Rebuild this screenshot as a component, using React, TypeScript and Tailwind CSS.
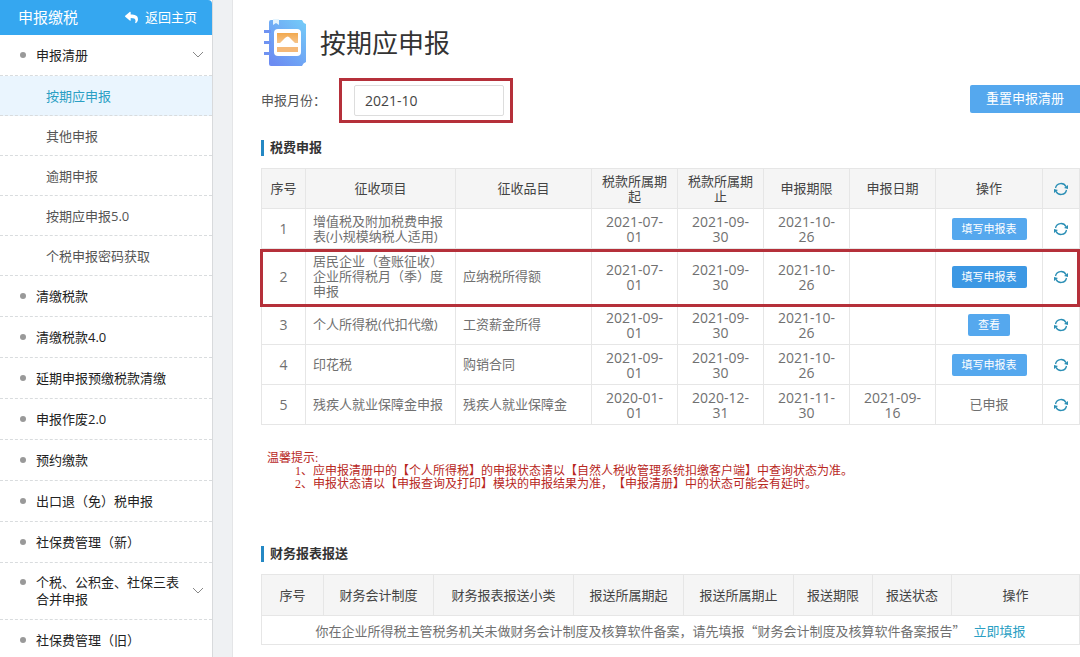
import type { ReactNode } from "react";
import { FaReply } from "react-icons/fa";

type MenuItem = {
  label: string;
  expandable?: boolean;
  children?: string[];
};

type TaxRow = {
  item: string;
  subItem: string;
  from: string;
  to: string;
  deadline: string;
  filedOn?: string;
  action: string;
  done?: boolean;
  highlighted?: boolean;
};

const menu: MenuItem[] = [
  {
    label: "申报清册",
    expandable: true,
    children: ["按期应申报", "其他申报", "逾期申报", "按期应申报5.0", "个税申报密码获取"],
  },
  { label: "清缴税款" },
  { label: "清缴税款4.0" },
  { label: "延期申报预缴税款清缴" },
  { label: "申报作废2.0" },
  { label: "预约缴款" },
  { label: "出口退（免）税申报" },
  { label: "社保费管理（新）" },
  { label: "个税、公积金、社保三表合并申报", expandable: true },
  { label: "社保费管理（旧）" },
];

const taxRows: TaxRow[] = [
  {
    item: "增值税及附加税费申报表(小规模纳税人适用)",
    subItem: "",
    from: "2021-07-01",
    to: "2021-09-30",
    deadline: "2021-10-26",
    action: "填写申报表",
  },
  {
    item: "居民企业（查账征收）企业所得税月（季）度申报",
    subItem: "应纳税所得额",
    from: "2021-07-01",
    to: "2021-09-30",
    deadline: "2021-10-26",
    action: "填写申报表",
    highlighted: true,
  },
  {
    item: "个人所得税(代扣代缴)",
    subItem: "工资薪金所得",
    from: "2021-09-01",
    to: "2021-09-30",
    deadline: "2021-10-26",
    action: "查看",
  },
  {
    item: "印花税",
    subItem: "购销合同",
    from: "2021-09-01",
    to: "2021-09-30",
    deadline: "2021-10-26",
    action: "填写申报表",
  },
  {
    item: "残疾人就业保障金申报",
    subItem: "残疾人就业保障金",
    from: "2020-01-01",
    to: "2020-12-31",
    deadline: "2021-11-30",
    filedOn: "2021-09-16",
    action: "已申报",
    done: true,
  },
];

export default function App() {
  return (
    <div className="flex h-screen overflow-hidden bg-[#eff1f3] font-['Open_Sans','Noto_Sans_CJK_SC',sans-serif] text-[13px] text-[#707070] [text-spacing-trim:space-all]">
      <Sidebar />
      <main className="ml-[19px] min-w-0 flex-1 border-l border-[#e4e5e7] bg-white pl-7">
        <header className="flex items-center gap-[13px] pt-[19px]">
          <BookIcon />
          <h1 className="text-[26px] leading-[46px] text-[#333]">按期应申报</h1>
        </header>

        <div className="mt-[11px] flex items-center">
          <label htmlFor="month" className="w-[78px] text-[#555]">
            申报月份：
          </label>
          <div className="border-3 border-[#b5303a] py-1 pr-1.5 pl-3">
            <input
              id="month"
              type="text"
              defaultValue="2021-10"
              className="block h-[31px] w-[150px] rounded-xs border border-[#ddd] bg-white px-2.5 text-sm text-[#444] outline-none"
            />
          </div>
          <button type="button" className="mb-1 ml-auto h-7 rounded-l-xs bg-[#55a8ee] px-4 text-white">
            重置申报清册
          </button>
        </div>

        <SectionTitle className="mt-[15px]">税费申报</SectionTitle>
        <TaxTable />

        <div className="mt-[27px] pl-1.5 font-['Liberation_Serif','Noto_Sans_CJK_SC',serif] text-xs leading-[13px] text-[#b8281e]">
          <p>温馨提示:</p>
          <ol className="pl-7">
            <li>1、应申报清册中的【个人所得税】的申报状态请以【自然人税收管理系统扣缴客户端】中查询状态为准。</li>
            <li>2、申报状态请以【申报查询及打印】模块的申报结果为准，【申报清册】中的状态可能会有延时。</li>
          </ol>
        </div>

        <SectionTitle className="mt-[53px]">财务报表报送</SectionTitle>
        <ReportTable />
      </main>
    </div>
  );
}

function Sidebar() {
  return (
    <aside className="w-[213px] shrink-0 border-r border-[#d8dadc] bg-white">
      <div className="flex h-[35px] items-center justify-between rounded-tr-sm bg-[#35a7f0] pr-[15px] pl-[18px] text-white">
        <h2 className="text-[15px]">申报缴税</h2>
        <a href="#" className="flex items-center gap-[7px]">
          <FaReply className="size-[13px]" />
          返回主页
        </a>
      </div>
      <nav>
        <ul>
          {menu.map((entry) => (
            <li key={entry.label}>
              <a
                href="#"
                className="flex min-h-[41px] items-center justify-between border-b border-dashed border-[#d9dcde] py-[11px] pr-2 pl-5 text-[#222]"
              >
                <span className="flex gap-2.5 leading-[17px]">
                  <span className="mt-[5px] size-1.5 shrink-0 rounded-full bg-[#999]" />
                  <span className="max-w-[150px]">{entry.label}</span>
                </span>
                {entry.expandable && <Chevron />}
              </a>
              {entry.children && (
                <ul>
                  {entry.children.map((child, i) => (
                    <li key={child}>
                      <a
                        href="#"
                        className={`flex h-10 items-center border-b border-dashed border-[#d9dcde] pt-0.5 pl-[46px] ${
                          i === 0 ? "bg-[#eaf5fe] text-[#2b9fc4]" : "text-[#555]"
                        }`}
                      >
                        {child}
                      </a>
                    </li>
                  ))}
                </ul>
              )}
            </li>
          ))}
        </ul>
      </nav>
    </aside>
  );
}

function SectionTitle({ children, className }: { children: ReactNode; className: string }) {
  return (
    <h3 className={`flex h-5 items-center gap-1.5 font-bold text-[#333] ${className}`}>
      <span className="h-4 w-[3px] bg-[#2488c4]" />
      {children}
    </h3>
  );
}

function TaxTable() {
  return (
    <table className="mt-2.5 w-full table-fixed border-collapse leading-[15px]">
      <colgroup>
        <col className="w-11" />
        <col className="w-[150px]" />
        <col className="w-[136px]" />
        <col className="w-[86px]" />
        <col className="w-[86px]" />
        <col className="w-[86px]" />
        <col className="w-[86px]" />
        <col />
        <col className="w-[37px]" />
      </colgroup>
      <thead>
        <tr className="h-10 bg-[#f5f5f5]">
          <Th>序号</Th>
          <Th>征收项目</Th>
          <Th>征收品目</Th>
          <Th>税款所属期起</Th>
          <Th>税款所属期止</Th>
          <Th>申报期限</Th>
          <Th>申报日期</Th>
          <Th>操作</Th>
          <Th>
            <RefreshButton label="全部刷新" />
          </Th>
        </tr>
      </thead>
      <tbody>
        {taxRows.map((row, i) => (
          <tr key={row.item} className={row.highlighted ? "relative h-14" : "h-10"}>
            <NumTd>
              {i + 1}
              {row.highlighted && (
                <span className="pointer-events-none absolute top-0 right-0 -bottom-0.5 -left-0.5 border-3 border-[#b5303a]" />
              )}
            </NumTd>
            <Td>{row.item}</Td>
            <Td>{row.subItem}</Td>
            <NumTd>{breakableDate(row.from)}</NumTd>
            <NumTd>{breakableDate(row.to)}</NumTd>
            <NumTd>{breakableDate(row.deadline)}</NumTd>
            <NumTd>{row.filedOn && breakableDate(row.filedOn)}</NumTd>
            <Td center>
              {row.done ? (
                row.action
              ) : (
                <button
                  type="button"
                  className={`h-[22px] rounded-xs px-2.5 text-[11px] text-white ${
                    row.highlighted ? "bg-[#3c98e4]" : "bg-[#55a8ee]"
                  }`}
                >
                  {row.action}
                </button>
              )}
            </Td>
            <Td center>
              <RefreshButton label="刷新" />
            </Td>
          </tr>
        ))}
      </tbody>
    </table>
  );
}

function ReportTable() {
  return (
    <table className="mt-2.5 w-full table-fixed border-collapse leading-[15px]">
      <colgroup>
        <col className="w-[62px]" />
        <col className="w-[110px]" />
        <col className="w-[140px]" />
        <col className="w-[110px]" />
        <col className="w-[110px]" />
        <col className="w-[79px]" />
        <col className="w-[79px]" />
        <col />
      </colgroup>
      <thead>
        <tr className="h-[41px] bg-[#f5f5f5]">
          <Th>序号</Th>
          <Th>财务会计制度</Th>
          <Th>财务报表报送小类</Th>
          <Th>报送所属期起</Th>
          <Th>报送所属期止</Th>
          <Th>报送期限</Th>
          <Th>报送状态</Th>
          <Th>操作</Th>
        </tr>
      </thead>
      <tbody>
        <tr className="h-[29px]">
          <td colSpan={8} className="border border-[#e6e6e6] text-center font-['Noto_Sans_CJK_SC',sans-serif]">
            你在企业所得税主管税务机关未做财务会计制度及核算软件备案，请先填报“财务会计制度及核算软件备案报告”
            <a href="#" className="ml-2 text-[#2b9fc4]">
              立即填报
            </a>
          </td>
        </tr>
      </tbody>
    </table>
  );
}

function Th({ children }: { children: ReactNode }) {
  return <th className="border border-[#e6e6e6] px-2 py-1 font-normal text-[#444]">{children}</th>;
}

function Td({ children, center }: { children?: ReactNode; center?: boolean }) {
  return <td className={`border border-[#e6e6e6] px-[7px] py-1 ${center ? "text-center" : ""}`}>{children}</td>;
}

function NumTd({ children }: { children?: ReactNode }) {
  return <td className="border border-[#e6e6e6] px-[7px] py-0.5 text-center text-sm leading-[15px]">{children}</td>;
}

// zero-width space lets the day wrap in narrow columns
function breakableDate(value: string) {
  return `${value.slice(0, 8)}\u200b${value.slice(8)}`;
}

function Chevron() {
  return (
    <svg className="h-2 w-3 shrink-0" viewBox="0 0 12 8" fill="none" stroke="#888">
      <path d="M1 1l5 5 5-5" />
    </svg>
  );
}

function RefreshButton({ label }: { label: string }) {
  return (
    <button type="button" aria-label={label} className="block w-full">
      <svg className="mx-auto size-3.5" viewBox="0 0 14 14" fill="none" stroke="#2b8fb5" strokeWidth="1.3">
        <path d="M1.5 6A5.6 5.6 0 0 1 12 4.600" />
        <path d="M12.5 8A5.6 5.6 0 0 1 2 9.400" />
        <path d="M14 3v4l-4-1zM0 11V7l4 1z" fill="#2b8fb5" stroke="none" />
      </svg>
    </button>
  );
}

function BookIcon() {
  return (
    <svg className="ml-[3px] h-12 w-[43px]" viewBox="0 0 43 48">
      <defs>
        <linearGradient id="cover" x1="1" y1="0" x2="0.2" y2="1">
          <stop offset="0" stopColor="#74cdf8" />
          <stop offset="1" stopColor="#6c8cf2" />
        </linearGradient>
        <linearGradient id="photo" x1="0" y1="0" x2="0" y2="1">
          <stop offset="0" stopColor="#f2a94e" />
          <stop offset="1" stopColor="#f6c48a" />
        </linearGradient>
      </defs>
      <path d="M7 1h31q1 3 4 4v38q-3 1-4 4H7a2 2 0 0 1-2-2V3a2 2 0 0 1 2-2z" fill="url(#cover)" />
      <path d="M0 11h7v3H0zM0 22h7v3H0zM0 33h7v3H0z" fill="#6f93f2" />
      <path d="M9 0h6v6l-3-2-3 2z" fill="#e4f4fe" />
      <rect x="10" y="10" width="27" height="27" rx="4" fill="#fff" />
      <path d="M13 14h21v10h-3l-5-5q-2-3-5 0l-5 5h-3z" fill="url(#photo)" />
      <path d="M13 28h21v5H13z" fill="#f5b978" />
    </svg>
  );
}
